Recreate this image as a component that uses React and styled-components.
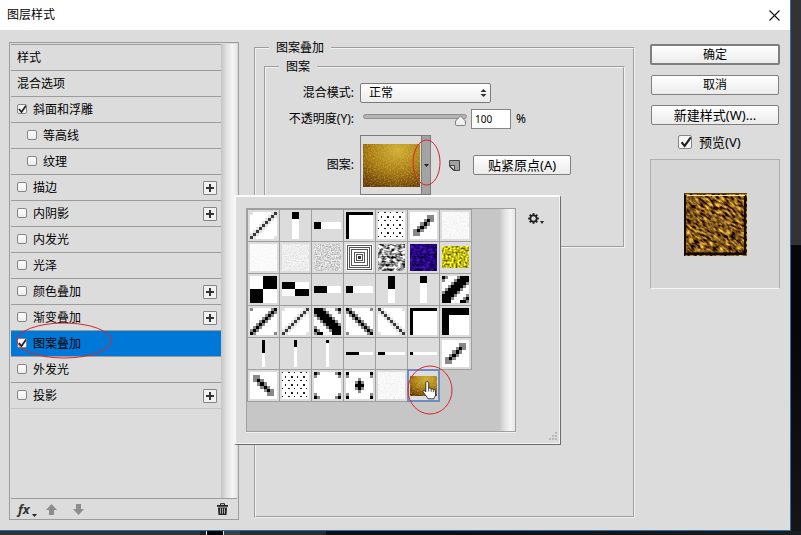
import React from "react";
import styled, { createGlobalStyle, css } from "styled-components";

const GlobalStyle = createGlobalStyle`
  *, *::before, *::after { box-sizing: border-box; }
  body {
    margin: 0;
    color: #000;
    background: #141414;
    font: 12px/16px "Noto Sans", "Noto Sans CJK SC", sans-serif;
  }
  button, input, select { font: inherit; color: inherit; }
`;

const svgUrl = (body, w, h) =>
  `url("data:image/svg+xml,${encodeURIComponent(
    `<svg xmlns='http://www.w3.org/2000/svg' width='${w}' height='${h}' viewBox='0 0 ${w} ${h}'>${body}</svg>`
  )}")`;

const tickImage = svgUrl(
  "<path d='M2.5 5.5 5 8.5 10 1.5' fill='none' stroke='#222' stroke-width='1.7'/>",
  11,
  11
);
const thumbImage = svgUrl(
  "<path d='M5.5 .8 10.4 6v3.6a1 1 0 0 1-1 1H1.6a1 1 0 0 1-1-1V6z' fill='#f1f1f1' stroke='#777'/>",
  11,
  11
);

const Desktop = styled.div`
  min-height: 100vh;
  display: flex;
  padding: 0 10px 4px 0;
  background:
    linear-gradient(90deg, #303438 0 200px, #222 200px 206px, #eee 206px 207px, #000 207px 223px, #ddd 223px 224px, #3d4043 224px 240px, #2a2c2e 240px 326px, #0d1012 326px 460px, #1b1d1f) 0 100% / 100% 4px no-repeat,
    linear-gradient(#333 0 245px, #070707 245px 330px, #161616) 100% 0 / 10px 100% no-repeat;
`;

const Dialog = styled.main`
  flex: 1;
  display: flex;
  flex-direction: column;
  background: #dcdcdc;
  border: solid #2f6d9f;
  border-width: 0 1px 1px 0;
`;

const TitleBar = styled.header`
  height: 30px;
  display: flex;
  align-items: center;
  justify-content: space-between;
  padding: 0 9px 0 7px;
  background: #fff;
`;

const Title = styled.h1`
  margin: 0;
  font-size: 12px;
  font-weight: 400;
`;

const IconButton = styled.button`
  display: grid;
  place-items: center;
  padding: 0;
  border: 0;
  background: none;
`;

const Columns = styled.div`
  flex: 1;
  display: grid;
  grid-template-columns: 230px 1fr 130px;
  gap: 15px;
  padding: 10px 10px 10px 9px;
`;

const Sidebar = styled.section`
  margin-top: 2px;
  padding: 1px 1px 0;
  display: flex;
  flex-direction: column;
  border: 1px solid #9c9c9c;
`;

const ListArea = styled.div`
  flex: 1;
  display: flex;
`;

const EffectList = styled.ul`
  flex: 1;
  margin: 0;
  padding: 0;
  list-style: none;
  &::after {
    content: "";
    display: block;
    border-top: 1px solid #c4c4c4;
  }
`;

const ScrollTrack = styled.div`
  width: 16px;
  background: linear-gradient(90deg, #c4c4c4, #dedede 30%, #f5f5f5 70%, #e6e6e6);
`;

const EffectRow = styled.li`
  height: 26px;
  display: flex;
  align-items: center;
  justify-content: space-between;
  padding: 0 4px 0 ${(p) => (p.$sub ? 16 : 6)}px;
  border-top: 1px solid #9c9c9c;
  position: relative;
  ${(p) => p.$selected && css`background: #0078d7 padding-box;`}
`;

const EffectLabel = styled.label`
  display: flex;
  align-items: center;
  gap: 6px;
`;

const CheckBox = styled.input`
  appearance: none;
  width: ${(p) => (p.$large ? 14 : 10)}px;
  height: ${(p) => (p.$large ? 14 : 10)}px;
  margin: 0 0 ${(p) => (p.$large ? 0 : 2)}px;
  border: 1px solid #858585;
  border-radius: 2px;
  background: linear-gradient(#fff, #ececec);
  &:checked {
    background: ${tickImage} center / ${(p) => (p.$large ? 13 : 11)}px no-repeat border-box, #f6f6f6;
  }
`;

const AddButton = styled.button`
  width: 14px;
  height: 14px;
  display: grid;
  place-items: center;
  padding: 0;
  border: 1px solid #858585;
  border-radius: 1px;
  background: #f1f1f1;
`;

const Footer = styled.footer`
  height: 21px;
  display: flex;
  align-items: center;
  padding: 0 9px 0 7px;
  border-top: 1px solid #9c9c9c;
`;

const FxButton = styled(IconButton)`
  width: 28px;
  display: flex;
  align-items: flex-end;
  gap: 2px;
  font: italic bold 13px/16px "Open Sans", sans-serif;
  color: #333;
`;

const MoveButton = styled(IconButton)`
  width: 27px;
  justify-content: start;
`;

const PushRight = styled(IconButton)`
  margin-left: auto;
`;

const Group = styled.fieldset`
  min-width: 0;
  margin: 0 0 ${(p) => (p.$outer ? 2 : 0)}px;
  padding: ${(p) => (p.$outer ? "3px 8px" : "8px 8px 51px")};
  border: 2px groove #f2f2f2;
`;

const GroupTitle = styled.legend`
  margin-left: 5px;
  padding: 0 7px;
  line-height: 16px;
`;

const Fields = styled.div`
  display: grid;
  grid-template-columns: 80px 1fr;
  column-gap: 6px;
  row-gap: 6px;
  align-items: center;
`;

const FieldLabel = styled.label`
  text-align: right;
  white-space: nowrap;
`;

const FieldRow = styled.div`
  display: flex;
  align-items: center;
`;

const SelectBox = styled.div`
  display: grid;
  align-items: center;
  width: 131px;
  & > * { grid-area: 1 / 1; }
  & > svg { justify-self: end; margin-right: 4px; pointer-events: none; }
`;

const Select = styled.select`
  appearance: none;
  width: 100%;
  height: 20px;
  padding: 0 8px;
  border: 1px solid #7c7c7c;
  border-radius: 2px;
  background: linear-gradient(#fff, #ececec);
`;

const Slider = styled.input`
  appearance: none;
  align-self: flex-start;
  width: 104px;
  height: 15px;
  margin: 0 4px 0 3px;
  background: none;
  &::-webkit-slider-runnable-track {
    height: 5px;
    border: 1px solid #8e8e8e;
    border-radius: 3px;
    background: #b4b4b4;
  }
  &::-webkit-slider-thumb {
    appearance: none;
    width: 11px;
    height: 11px;
    background: ${thumbImage};
  }
`;

const NumberBox = styled.input`
  width: 40px;
  height: 20px;
  margin-right: 5px;
  padding: 0 3px;
  border: 1px solid #858585;
  background: #fff;
  font-size: 10px;
`;

const Unit = styled.span`
  font-size: 12px;
`;

const Picker = styled.div`
  position: relative;
  z-index: 1;
  margin-right: 18px;
`;

const PickerButton = styled.button`
  width: 71px;
  height: 60px;
  display: grid;
  grid-template-columns: 1fr 9px;
  align-items: stretch;
  padding: 0;
  border: 1px solid #7c7c7c;
  background: #dcdcdc;
`;

const PickerPreview = styled.span`
  display: grid;
  place-items: center;
`;

const PickerArrow = styled.span`
  display: grid;
  place-items: center;
  border-left: 1px solid #7c7c7c;
  background: #a3a3a3;
`;

const PushButton = styled.button`
  height: ${(p) => (p.$primary ? 21 : 20)}px;
  margin: ${(p) => (p.$inset ? "0 1px" : "0")};
  padding: 0 14px;
  border: ${(p) => (p.$primary ? 2 : 1)}px solid #7f7f7f;
  border-radius: 2px;
  background: linear-gradient(#fff, #ebebeb);
  font-size: ${(p) => (p.$wide ? 13 : 12)}px;
  line-height: 16px;
  white-space: nowrap;
`;

const SnapButton = styled(PushButton)`
  margin-left: 13px;
`;

const Popup = styled.div`
  position: absolute;
  top: 60px;
  left: -126px;
  width: 327px;
  height: 250px;
  display: flex;
  align-items: flex-start;
  justify-content: space-between;
  padding: 11px 16px 0 10px;
  border: solid;
  border-width: 2px 1px 1px 2px;
  border-color: #fafafa #6c6c6c #6c6c6c #fafafa;
  background: #dcdcdc;
  box-shadow: inset -1px -1px #f4f4f4;
`;

const PatternPanel = styled.div`
  width: 270px;
  height: 224px;
  display: flex;
  justify-content: space-between;
  border: 1px solid #a0a0a0;
  background: #c6c6c6;
  box-shadow: 0 1px #f0f0f0;
`;

const PatternGrid = styled.div`
  display: grid;
  grid-template-columns: repeat(7, 32px);
  grid-auto-rows: 32px;
  align-content: start;
`;

const PatternCell = styled.button`
  position: relative;
  display: grid;
  place-items: center;
  width: 33px;
  height: 33px;
  padding: 0;
  border: 1px solid #9e9e9e;
  background: #dcdcdc;
  ${(p) => p.$selected && css`
    z-index: 1;
    border: 2px solid #718ac0;
  `}
`;

const GearButton = styled(IconButton)`
  margin-top: 5px;
  display: flex;
  align-items: flex-end;
  gap: 1px;
`;

const Mark = styled.svg`
  position: absolute;
  z-index: 3;
  left: ${(p) => p.$left}px;
  top: ${(p) => p.$top}px;
  pointer-events: none;
`;

const Grip = styled.svg`
  position: absolute;
  right: 3px;
  bottom: 3px;
`;

const Actions = styled.aside`
  margin-top: 4px;
  display: flex;
  flex-direction: column;
  gap: 10px;
`;

const PreviewToggle = styled.label`
  height: 14px;
  display: flex;
  align-items: center;
  gap: 7px;
  padding-left: 28px;
  font-size: 13px;
`;

const PreviewBox = styled.div`
  height: 130px;
  display: grid;
  place-items: center;
  border: 1px solid #b0b0b0;
  border-bottom-color: #f5f5f5;
  background: #d6d6d6;
`;

/* ---------- drawings ---------- */

const Ellipse = ({ left, top, w, h }) => (
  <Mark $left={left} $top={top} width={w} height={h} aria-hidden="true">
    <ellipse cx={w / 2} cy={h / 2} rx={w / 2 - 1} ry={h / 2 - 1} fill="none" stroke="#d7262b" />
  </Mark>
);

const Gold = ({ w, h }) => (
  <svg width={w} height={h} viewBox="0 0 57 43" preserveAspectRatio="none">
    <defs>
      <radialGradient id="gold" cx=".6" cy=".15" r=".95">
        <stop offset="0" stopColor="#cfb038" />
        <stop offset=".5" stopColor="#a67c16" />
        <stop offset="1" stopColor="#5e3408" />
      </radialGradient>
      <filter id="grain" x="0" y="0" width="1" height="1" colorInterpolationFilters="sRGB">
        <feTurbulence type="fractalNoise" baseFrequency=".7" numOctaves="2" seed="4" />
        <feColorMatrix values="0 0 0 0 .95  0 0 0 0 .8  0 0 0 0 .3  1.1 0 0 0 -.46" />
      </filter>
    </defs>
    <rect width="57" height="43" fill="url(#gold)" />
    <rect width="57" height="43" filter="url(#grain)" />
  </svg>
);

const PreviewSwatch = () => (
  <svg width="63" height="63">
    <defs>
      <filter id="brushed" x="0" y="0" width="1" height="1" colorInterpolationFilters="sRGB">
        <feTurbulence type="fractalNoise" baseFrequency=".16 .5" numOctaves="3" seed="9" />
        <feColorMatrix values="2.1 0 0 0 -.55  1.8 0 0 0 -.56  .7 0 0 0 -.25  0 0 0 0 1" />
      </filter>
      <clipPath id="face"><rect width="63" height="63" /></clipPath>
    </defs>
    <g clipPath="url(#face)">
      <rect x="-30" y="-30" width="123" height="123" transform="rotate(38 31 31)" filter="url(#brushed)" />
    </g>
    <path d="M1 2v59h60V2" fill="none" stroke="#140c00" strokeWidth="2" />
    <path d="M1 60.500h61" stroke="#0a0600" strokeWidth="2" />
    <path d="M0 .5h63" stroke="#5b3d05" />
    <path d="M3 2.500h58" stroke="#f6e9b0" />
  </svg>
);

const shades = { "#": "#000", d: "#3a3a3a", g: "#888", l: "#e2e2e2" };

const Bitmap = ({ rows, flip }) => {
  const n = rows.length;
  const s = 27 / n;
  return (
    <g shapeRendering="crispEdges">
      <rect width="27" height="27" fill="#fff" />
      {rows.flatMap((row, y) =>
        [...(flip ? [...row].reverse() : row)].map((c, x) =>
          shades[c] ? <rect key={`${x}-${y}`} x={x * s} y={y * s} width={s} height={s} fill={shades[c]} /> : null
        )
      )}
    </g>
  );
};

const thin = ["l......ld", "......ldl", ".....ldl.", "....ldl..", "...ldl...", "..ldl....", ".ldl.....", "ldl......", "dl......l"];
const medium = ["g......g#", "......g#g", ".....g#g.", "....g#g..", "...g#g...", "..g#g....", ".g#g.....", "g#g......", "#g......g"];
const thick = ["#g...g###", "g...g####", "...g####g", "..g####g.", ".g####g..", "g####g...", "####g...g", "###g...g#", "###...##g"];
const short = ["........", ".....gg.", "....g#g.", "...g#g..", "..g#g...", ".g#g....", ".gg.....", "........"];
const diamond = ["#.......#", "g.......g", "....g....", "...g#g...", "...###...", "...g#g...", "....g....", "g.......g", "#.......#"];
const cornerDots = ["#g.....g#", "g.......g", ".........", ".........", ".........", ".........", ".........", "g.......g", "#g.....g#"];

const Bars = ({ parts }) => (
  <g shapeRendering="crispEdges">
    {parts.map(([x, y, w, h, fill], i) => (
      <rect key={i} x={x} y={y} width={w} height={h} fill={fill} />
    ))}
  </g>
);

const K = "#000";
const W = "#fff";
const vBar = (x, w, cut) => <Bars parts={[[x, 0, w, cut, K], [x, cut, w, 27 - cut, W]]} />;
const hBar = (y, h, cut) => <Bars parts={[[0, y, cut, h, K], [cut, y, 27 - cut, h, W]]} />;
const corner = (t) => <Bars parts={[[0, 0, 27, 27, K], [t, t, 27 - t, 27 - t, W]]} />;

const dots = () => {
  const parts = [[0, 0, 27, 27, W]];
  for (let r = 0; r < 7; r++) {
    for (let c = 0; c < 5; c++) {
      const x = c * 6 + (r % 2 ? 3 : 0);
      if (x < 26) parts.push([x, r * 4, c % 2 ? 2 : 1, r % 2 ? 2 : 1, "#222"]);
    }
  }
  return <Bars parts={parts} />;
};

const Noise = ({ id, values, freq = ".8", seed = 3, y = 0, h = 27 }) => (
  <>
    <filter id={id} x="0" y="0" width="1" height="1" colorInterpolationFilters="sRGB">
      <feTurbulence type="fractalNoise" baseFrequency={freq} numOctaves="2" seed={seed} />
      <feColorMatrix values={values} />
    </filter>
    <rect y={y} width="27" height={h} filter={`url(#${id})`} />
  </>
);

const grayNoise = (gain, base) => `${gain} 0 0 0 ${base} ${gain} 0 0 0 ${base} ${gain} 0 0 0 ${base} 0 0 0 0 1`;

const Rings = () => (
  <g fill="none" stroke="#555" shapeRendering="crispEdges">
    <rect width="27" height="27" fill="#fff" stroke="none" />
    {[1, 3, 5, 8, 10].map((i) => (
      <rect key={i} x={i + 0.5} y={i + 0.5} width={26 - 2 * i} height={26 - 2 * i} />
    ))}
    <rect x="12" y="12" width="3" height="3" fill="#333" stroke="none" />
  </g>
);

const patterns = [
  <Bitmap rows={thin} />, vBar(10, 7, 7), hBar(10, 7, 7), corner(3), dots(), <Bitmap rows={short} />,
  <Noise id="n1" values={grayNoise(0.12, 0.91)} />,
  <Noise id="n2" values={grayNoise(0.08, 0.94)} />,
  <Noise id="n3" values={grayNoise(0.2, 0.83)} />,
  <Noise id="n4" values={grayNoise(0.7, 0.48)} />,
  <Rings />,
  <Noise id="n5" values={grayNoise(2.4, -0.6)} freq=".25 .4" />,
  <Noise id="n6" values=".6 0 0 0 -.15  .2 0 0 0 -.08  1.2 0 0 0 -.12  0 0 0 0 1" freq=".3 .4" />,
  <Noise id="n7" values="1.7 0 0 0 -.1  1.7 0 0 0 -.12  .4 0 0 0 -.1  0 0 0 0 1" freq=".5" y={2} h={22} />,
  <Bars parts={[[0, 0, 27, 27, W], [13, 0, 14, 13, K], [0, 13, 13, 14, K]]} />,
  <Bars parts={[[0, 6, 27, 14, W], [0, 6, 13, 7, K], [13, 13, 14, 7, K]]} />,
  hBar(10, 7, 13), hBar(10, 7, 7), vBar(10, 7, 13), vBar(10, 7, 7), <Bitmap rows={thick} />,
  <Bitmap rows={medium} />, <Bitmap rows={thin} />, <Bitmap rows={thick} flip />, <Bitmap rows={medium} flip />,
  <Bitmap rows={thin} flip />, corner(3), corner(7),
  vBar(12, 3, 13), vBar(12, 3, 7), vBar(12, 3, 3), hBar(12, 3, 13), hBar(12, 3, 7), hBar(12, 3, 3),
  <Bitmap rows={short} />,
  <Bitmap rows={short} flip />, dots(),
  <Bitmap rows={cornerDots} />,
  <Bitmap rows={diamond} />,
  <Noise id="n8" values={grayNoise(0.12, 0.91)} seed={7} />,
];

const HandCursor = () => (
  <Mark $left={12} $top={9} width="18" height="20" aria-hidden="true">
    <path
      d="M6 1.500c1.100 0 1.700.8 1.700 1.700v5l1-.2c.9 0 1.300.4 1.500.9.900-.3 1.800 0 2.100.8 1.200-.3 2.200.3 2.200 1.500v3.300c0 1.600-1.200 2.600-1.500 4.300H7c-.8-2-2.700-3.700-4.800-6.600-.8-1.200.5-2.200 1.700-1.300l.9 1V3.200c0-1 .3-1.700 1.200-1.700z"
      fill="#fff" stroke="#222" strokeWidth=".9"
    />
    <path d="M7.700 8v3.500M10.200 9v2.800M12.400 10v2.200" stroke="#222" strokeWidth=".8" />
  </Mark>
);

const DownDot = () => (
  <svg width="5" height="3"><path d="M0 0h5L2.500 3z" fill="#222" /></svg>
);

const ArrowIcon = ({ down }) => (
  <svg width="11" height="11" viewBox="0 0 11 11">
    <path d="M5.500 0 11 6H8v5H3V6H0z" fill="#8d8d8d" transform={down ? "rotate(180 5.500 5.500)" : undefined} />
  </svg>
);

const TrashIcon = () => (
  <svg width="11" height="12" viewBox="0 0 11 12">
    <path d="M3.500 2V.7h4V2" fill="none" stroke="#222" />
    <path d="M0 2h11v1.700H0zM1 4.500h9L9.500 12h-8z" fill="#222" />
    <path d="M3.500 5.200v5.600M5.500 5.200v5.600M7.500 5.200v5.600" stroke="#ccc" strokeWidth=".8" />
  </svg>
);

const NewPatternIcon = () => (
  <svg width="11" height="11">
    <path d="M.5.500h10v10h-6l-4-4z" fill="#a0a0a0" stroke="#444" />
    <path d="M.5 5.500h5v5z" fill="#d8d8d8" stroke="#444" />
  </svg>
);

const GearIcon = () => (
  <svg width="11" height="11" viewBox="-5.500 -5.500 11 11">
    {[0, 45, 90, 135].map((a) => (
      <path key={a} d="M-1-5.300h2v10.600h-2z" fill="#222" transform={`rotate(${a})`} />
    ))}
    <circle r="3.100" fill="#dcdcdc" stroke="#222" strokeWidth="1.600" />
  </svg>
);

/* ---------- page ---------- */

const effects = [
  { name: "样式", plain: true },
  { name: "混合选项", plain: true },
  { name: "斜面和浮雕", checked: true },
  { name: "等高线", sub: true },
  { name: "纹理", sub: true },
  { name: "描边", add: true },
  { name: "内阴影", add: true },
  { name: "内发光" },
  { name: "光泽" },
  { name: "颜色叠加", add: true },
  { name: "渐变叠加", add: true },
  { name: "图案叠加", checked: true, selected: true },
  { name: "外发光" },
  { name: "投影", add: true },
];

const Effect = ({ name, plain, checked, sub, add, selected }) => (
  <EffectRow $sub={sub} $selected={selected}>
    {plain ? (
      <span>{name}</span>
    ) : (
      <EffectLabel>
        <CheckBox type="checkbox" defaultChecked={checked} />
        {name}
      </EffectLabel>
    )}
    {add && (
      <AddButton type="button" aria-label={`添加${name}`}>
        <svg width="8" height="8"><path d="M4 0v8M0 4h8" stroke="#333" strokeWidth="2" /></svg>
      </AddButton>
    )}
    {selected && <Ellipse left={5} top={-9} w={96} h={37} />}
  </EffectRow>
);

const PatternPopup = () => (
  <Popup>
    <PatternPanel>
      <PatternGrid>
        {patterns.map((art, i) => (
          <PatternCell key={i} type="button" aria-label={`图案 ${i + 1}`}>
            <svg width="27" height="27">{art}</svg>
          </PatternCell>
        ))}
        <PatternCell type="button" aria-label={`图案 ${patterns.length + 1}`} $selected>
          <Gold w={27} h={20} />
          <HandCursor />
          <Ellipse left={-2} top={-6} w={46} h={50} />
        </PatternCell>
      </PatternGrid>
      <ScrollTrack />
    </PatternPanel>
    <GearButton type="button" aria-label="图案选项">
      <GearIcon />
      <svg width="4" height="3"><path d="M0 0h4L2 3z" fill="#222" /></svg>
    </GearButton>
    <Grip width="9" height="9" aria-hidden="true">
      <path d="M7 0h2v2H7zM4 3h2v2H4zM7 3h2v2H7zM1 6h2v2H1zM4 6h2v2H4zM7 6h2v2H7z" fill="#b8b8b8" />
    </Grip>
  </Popup>
);

export default function App() {
  return (
    <>
      <GlobalStyle />
      <Desktop>
        <Dialog>
          <TitleBar>
            <Title>图层样式</Title>
            <IconButton type="button" aria-label="关闭">
              <svg width="13" height="13"><path d="M1.500 1.500l10 10M11.500 1.500l-10 10" stroke="#111" strokeWidth="1.100" /></svg>
            </IconButton>
          </TitleBar>
          <Columns>
            <Sidebar>
              <ListArea>
                <EffectList>
                  {effects.map((e) => <Effect key={e.name} {...e} />)}
                </EffectList>
                <ScrollTrack />
              </ListArea>
              <Footer>
                <FxButton type="button">fx<DownDot /></FxButton>
                <MoveButton type="button" aria-label="上移"><ArrowIcon /></MoveButton>
                <MoveButton type="button" aria-label="下移"><ArrowIcon down /></MoveButton>
                <PushRight type="button" aria-label="删除"><TrashIcon /></PushRight>
              </Footer>
            </Sidebar>

            <Group $outer>
              <GroupTitle>图案叠加</GroupTitle>
              <Group>
                <GroupTitle>图案</GroupTitle>
                <Fields>
                  <FieldLabel htmlFor="mode">混合模式:</FieldLabel>
                  <SelectBox>
                    <Select id="mode"><option>正常</option></Select>
                    <svg width="7" height="10"><path d="M.5 4 3.500 1l3 3zM.5 6l3 3 3-3z" fill="#333" /></svg>
                  </SelectBox>
                  <FieldLabel htmlFor="opacity">不透明度(Y):</FieldLabel>
                  <FieldRow>
                    <Slider type="range" min="0" max="100" defaultValue="100" aria-label="不透明度" />
                    <NumberBox id="opacity" type="text" defaultValue="100" />
                    <Unit>%</Unit>
                  </FieldRow>
                  <FieldLabel htmlFor="pattern">图案:</FieldLabel>
                  <FieldRow>
                    <Picker>
                      <PickerButton id="pattern" type="button">
                        <PickerPreview><Gold w={57} h={43} /></PickerPreview>
                        <PickerArrow><DownDot /></PickerArrow>
                      </PickerButton>
                      <Ellipse left={52} top={4} w={29} h={47} />
                      <PatternPopup />
                    </Picker>
                    <IconButton type="button" aria-label="新建图案"><NewPatternIcon /></IconButton>
                    <SnapButton type="button" $wide>贴紧原点(A)</SnapButton>
                  </FieldRow>
                </Fields>
              </Group>
            </Group>

            <Actions>
              <PushButton type="button" $primary>确定</PushButton>
              <PushButton type="button" $inset>取消</PushButton>
              <PushButton type="button" $inset $wide>新建样式(W)...</PushButton>
              <PreviewToggle>
                <CheckBox type="checkbox" defaultChecked $large />
                预览(V)
              </PreviewToggle>
              <PreviewBox><PreviewSwatch /></PreviewBox>
            </Actions>
          </Columns>
        </Dialog>
      </Desktop>
    </>
  );
}
